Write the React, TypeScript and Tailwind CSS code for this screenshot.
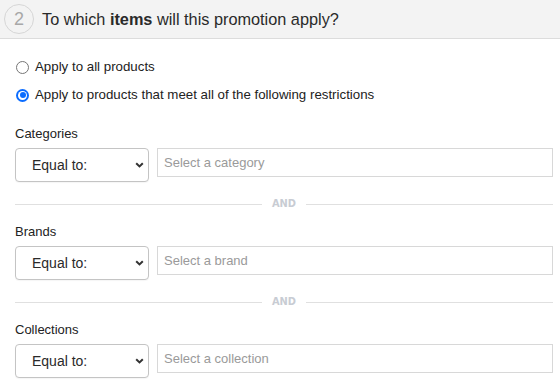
import React from "react";

const sections = [
  { label: "Categories", placeholder: "Select a category" },
  { label: "Brands", placeholder: "Select a brand" },
  { label: "Collections", placeholder: "Select a collection" },
];

function Chevron() {
  return (
    <svg width="9" height="6" viewBox="0 0 9 6" className="text-[#333]">
      <path d="M1.2 1.2 L4.5 4.4 L7.8 1.2" fill="none" stroke="currentColor" strokeWidth="2" />
    </svg>
  );
}

function Divider() {
  return (
    <div className="flex items-center h-[20px] mt-[12px] mb-[10px]">
      <div className="flex-1 h-px bg-[#e0e0e0]" />
      <span
        className="px-[10px] text-[11px] font-bold text-[#c8ccd3]"
        style={{ fontFamily: '"DejaVu Sans Condensed", "Liberation Sans Narrow", sans-serif', fontStretch: "condensed" }}
      >
        AND
      </span>
      <div className="flex-1 h-px bg-[#e0e0e0]" />
    </div>
  );
}

export default function App() {
  return (
    <div className="w-[560px] h-[385px] bg-white overflow-hidden text-[#222]" style={{ fontFamily: '"Liberation Sans", Arial, sans-serif' }}>
      {/* Header */}
      <div className="h-[39px] bg-[#f3f3f3] border-b border-[#dcdcdc] flex items-center pl-[4px]">
        <div className="w-[30px] h-[30px] rounded-full border border-[#d6d6d6] bg-[#f3f3f3] flex items-center justify-center text-[18px] text-[#a8a8a8]">
          2
        </div>
        <div className="ml-[8px] text-[16.3px] text-[#2a2a2a]">
          To which <b>items</b> will this promotion apply?
        </div>
      </div>

      <div className="pl-[15px] pr-[7px] pt-[21px]">
        {/* Radios */}
        <div className="flex flex-col gap-[14px] text-[13.3px] pl-[1px]">
          <label className="flex items-center gap-[6px] h-[14px]">
            <span className="w-[13px] h-[13px] rounded-full border border-[#767676] bg-white" />
            Apply to all products
          </label>
          <label className="flex items-center gap-[6px] h-[14px]">
            <span className="w-[13px] h-[13px] rounded-full bg-[#0a6cff] flex items-center justify-center">
              <span className="w-[9px] h-[9px] rounded-full bg-white flex items-center justify-center">
                <span className="w-[6px] h-[6px] rounded-full bg-[#0a6cff]" />
              </span>
            </span>
            Apply to products that meet all of the following restrictions
          </label>
        </div>

        {/* Sections */}
        <div className="mt-[24px]">
          {sections.map((s, i) => (
            <div key={s.label}>
              <div className="text-[13px] leading-[15px] h-[15px]">{s.label}</div>
              <div className="flex gap-[8px] mt-[7px] items-start">
                <div className="w-[134px] h-[34px] rounded-[4px] border border-[#c4c4c4] bg-white flex items-center justify-between pl-[16px] pr-[4px] text-[14px] text-[#2a2a2a] shadow-[0_1px_1px_rgba(0,0,0,0.04)]">
                  <span>Equal to:</span>
                  <Chevron />
                </div>
                <div className="flex-1 h-[29px] border border-[#d8d8d8] bg-white flex items-center pl-[6px] text-[13px] text-[#9a9a9a]">
                  {s.placeholder}
                </div>
              </div>
              {i < sections.length - 1 && <Divider />}
            </div>
          ))}
        </div>
      </div>
    </div>
  );
}
